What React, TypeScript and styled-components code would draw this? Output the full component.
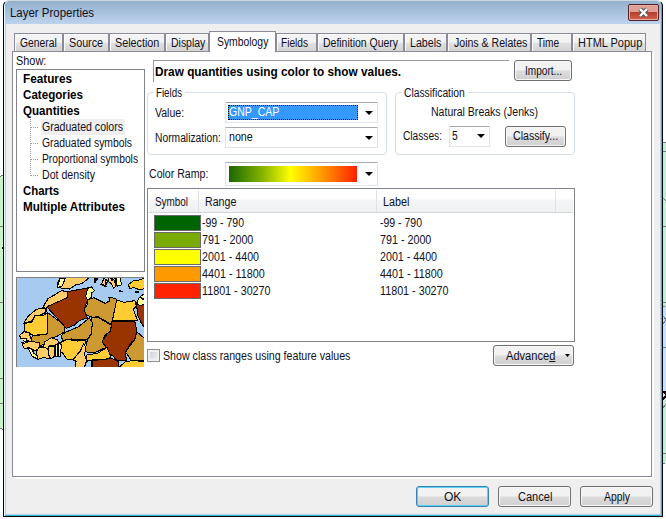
import React, { useLayoutEffect, useRef } from "react";
import styled, { createGlobalStyle } from "styled-components";

const Global = createGlobalStyle`
  * { box-sizing: border-box; }
  body { margin: 0; background: #fff; overflow: hidden; }
  body, button { font: 12px/16px "Liberation Sans", Arial, sans-serif; color: #10101c; }
`;

const Desktop = styled.div`
  width: 666px;
  height: 519px;
  display: flex;
  align-items: flex-start;
`;
const MapStrip = styled.svg`
  display: block;
  flex: none;
`;
const Dialog = styled.main`
  width: 660px;
  height: 517px;
  border: 1px solid #000;
  border-top-color: #cdd6df;
  border-radius: 6px 6px 0 0;
  background: #efefef;
  box-shadow: inset 1px 0 #e8f8fb, inset -1px -1px #35b9da, inset 2px 0 #b5cee9, inset -2px -2px #b5cee9;
  flex: none;
`;
const TitleBar = styled.header`
  height: 23px;
  margin: 0 1px;
  padding: 0 2px 0 5px;
  border-radius: 5px 5px 0 0;
  background: linear-gradient(#93b0cd, #bcd3ed);
  display: flex;
  align-items: center;
  justify-content: space-between;
`;
const CloseButton = styled.button`
  width: 31px;
  height: 17px;
  padding: 0;
  border: 1px solid #54202a;
  border-radius: 2px;
  box-shadow: inset 0 0 0 1px #e9aea2;
  background: linear-gradient(#dda093 0 45%, #b83c2b 50%, #d0654c);
  display: flex;
  align-items: center;
  justify-content: center;
`;
const TabBar = styled.nav`
  height: 27px;
  padding-left: 10px;
  display: flex;
  align-items: flex-end;
`;
const Tab = styled.div<{ $w: number; $pad: number; $active?: boolean }>`
  width: ${(p) => p.$w}px;
  height: ${(p) => (p.$active ? 21 : 18)}px;
  padding: ${(p) => (p.$active ? "2px 0 0" : "1px 0 0")} ${(p) => p.$pad}px;
  border: 1px solid #8b8a98;
  border-bottom: 0;
  background: ${(p) => (p.$active ? "#fff" : "linear-gradient(#f3f3f3 0 48%, #e0e0e0 55%, #d4d4d4)")};
  box-shadow: ${(p) => (p.$active ? "none" : "inset 1px 1px #fcfcfc")};
  margin-bottom: ${(p) => (p.$active ? -1 : 0)}px;
  flex: none;
`;
const Pane = styled.section`
  width: 640px;
  height: 426px;
  margin-left: 8px;
  border: 1px solid #8b8a98;
  background: #fff;
  box-shadow: 2px 2px #fcfcfc;
  padding-left: 3px;
  display: flex;
  align-items: flex-start;
`;
const Sidebar = styled.aside`
  width: 131px;
`;
const ShowLabel = styled.div`
  height: 17px;
  padding-top: 1px;
  display: flex;
`;
const Tree = styled.div`
  width: 129px;
  height: 203px;
  border: 1px solid #80828c;
  padding-top: 1px;
  margin-bottom: 5px;
`;
const Heading = styled.div`
  height: 16px;
  padding-left: 6px;
  font-weight: bold;
  color: #000;
`;
const Branches = styled.div`
  height: 64px;
  margin-left: 13px;
  background: repeating-linear-gradient(#9a9a9a 0 1px, transparent 1px 2px) 0 0 / 1px 57px no-repeat;
`;
const Leaf = styled.div`
  height: 16px;
  display: flex;
`;
const LeafText = styled.div<{ $selected?: boolean }>`
  padding: 0 2px 0 1px;
  background: ${(p) => (p.$selected ? "#efefef" : "transparent")};
`;
const Dash = styled.i`
  width: 8px;
  height: 1px;
  margin: 8px 2px 0 1px;
  background: repeating-linear-gradient(90deg, #9a9a9a 0 1px, transparent 1px 2px);
`;
const Content = styled.div`
  width: 428px;
`;
const TopRow = styled.div`
  height: 34px;
  padding: 8px 3px 0 6px;
  display: flex;
  justify-content: space-between;
  align-items: flex-start;
`;
const Banner = styled.h1`
  width: 356px;
  height: 22px;
  margin: 0;
  padding: 3px 0 0 1px;
  border: solid #96969b;
  border-width: 1px 0 0 1px;
  font-size: 12px;
  line-height: 16px;
  color: #000;
`;
const Button = styled.button<{ $w: number; $primary?: boolean }>`
  width: ${(p) => p.$w}px;
  height: 21px;
  padding: 0;
  border: 1px solid ${(p) => (p.$primary ? "#3c7fb1" : "#707070")};
  border-radius: 3px;
  background: linear-gradient(#f2f2f2 0 47%, #dddddd 52%, #cfcfcf);
  box-shadow: inset 0 0 0 1px ${(p) => (p.$primary ? "#5bd2f2" : "#f8f8f8")};
  display: flex;
  justify-content: center;
  align-items: center;
  flex: none;
`;
const Groups = styled.div`
  display: flex;
  justify-content: space-between;
  padding-top: 6px;
  height: 76px;
`;
const Group = styled.div<{ $w: number }>`
  width: ${(p) => p.$w}px;
  height: 63px;
  border: 1px solid #d5dfe5;
  border-radius: 4px;
  padding: 0 8px 0 7px;
`;
const Legend = styled.div`
  width: max-content;
  height: 16px;
  margin: -8px 0 -1px -1px;
  padding: 0 3px 0 2px;
  background: #fff;
`;
const FieldRow = styled.div`
  height: 25px;
  display: flex;
  align-items: center;
  justify-content: space-between;
`;
const Combo = styled.div<{ $w: number; $h?: number }>`
  width: ${(p) => p.$w}px;
  height: ${(p) => p.$h ?? 21}px;
  padding: 2px 4px 2px 2px;
  border: 1px solid #dfe3ec;
  border-top-color: #a9abb4;
  border-radius: 1px;
  background: #fff;
  display: flex;
  align-items: center;
  justify-content: space-between;
`;
const ComboValue = styled.div<{ $selected?: boolean }>`
  width: 130px;
  height: 15px;
  line-height: 15px;
  padding-left: 1px;
  background: ${(p) => (p.$selected ? "#3399ff" : "transparent")};
  color: ${(p) => (p.$selected ? "#fff" : "inherit")};
  outline: ${(p) => (p.$selected ? "1px dotted #201000" : "0")};
  outline-offset: -1px;
`;
const ClassesValue = styled.div`
  width: 12px;
`;
const Method = styled.div`
  height: 20px;
  margin-top: 4px;
  padding-left: 28px;
`;
const ClassesRow = styled.div`
  height: 24px;
  display: flex;
  align-items: center;
`;
const ClassesCombo = styled.div`
  margin: 0 15px 0 7px;
`;
const RampRow = styled.div`
  height: 24px;
  margin: 0 197px 2px 2px;
  display: flex;
  align-items: center;
  justify-content: space-between;
`;
const Ramp = styled.div`
  width: 128px;
  height: 16px;
  margin-left: 1px;
  background: linear-gradient(90deg, #1b6600, #80b000 25%, #ffff00 48%, #ffa500 70%, #ff2000);
`;
const Table = styled.div`
  height: 154px;
  border: 1px solid #80828c;
  padding: 1px;
`;
const HeadRow = styled.div`
  height: 23px;
  display: grid;
  grid-template-columns: 50px 178px 179px 1fr;
  border-bottom: 1px solid #d5d5d5;
  background: linear-gradient(#fff 40%, #f4f5f6 45%, #f0f1f2);
`;
const HeadCell = styled.div`
  border-right: 1px solid #dfe1e4;
  padding: 4px 0 0 6px;
  &:last-child { border: 0; }
`;
const Rows = styled.div`
  padding: 2px 0 0 5px;
`;
const Row = styled.div`
  height: 17px;
  display: grid;
  grid-template-columns: 48px 178px 1fr;
`;
const Swatch = styled.div<{ $c: string }>`
  width: 47px;
  height: 16px;
  border: 1px solid #6a6a6a;
  background: ${(p) => p.$c};
`;
const BottomRow = styled.div`
  padding: 3px 1px 0 0;
  display: flex;
  align-items: center;
  justify-content: space-between;
`;
const CheckLabel = styled.div`
  display: flex;
  align-items: center;
  gap: 3px;
`;
const Checkbox = styled.div`
  width: 13px;
  height: 13px;
  border: 1px solid #8e8f8f;
  background: linear-gradient(135deg, #c9ced4, #f4f4f4);
  box-shadow: inset 0 0 0 2px #f0f0f0;
`;
const ButtonArrow = styled.div`
  display: flex;
  align-items: center;
  margin: 0 -8px 0 10px;
`;
const Footer = styled.footer`
  display: flex;
  gap: 9px;
  justify-content: flex-end;
  padding: 9px 9px 0 0;
`;
const Fitted = styled.span<{ $w: number }>`
  display: block;
  width: ${(p) => p.$w}px;
  white-space: nowrap;
  flex: none;
`;
const Glyphs = styled.span`
  display: inline-block;
  transform-origin: 0 50%;
`;

/* Condenses or widens a label so that it occupies exactly w pixels. */
function Text({ w, children }: { w: number; children: React.ReactNode }) {
  const ref = useRef<HTMLSpanElement>(null);
  useLayoutEffect(() => {
    const el = ref.current;
    if (el) el.style.transform = `scaleX(${w / el.offsetWidth})`;
  }, [w, children]);
  return (
    <Fitted $w={w}>
      <Glyphs ref={ref}>{children}</Glyphs>
    </Fitted>
  );
}

const Arrow = ({ small }: { small?: boolean }) => (
  <svg width={small ? 5 : 8} height={small ? 3 : 4} viewBox="0 0 8 4" preserveAspectRatio="none">
    <path d="M0 0H8L4 4Z" fill="#000" />
  </svg>
);

const tabs: [string, number, number, number, boolean?][] = [
  ["General", 49, 5, 37],
  ["Source", 46, 5, 34],
  ["Selection", 56, 5, 44],
  ["Display", 44, 5, 34],
  ["Symbology", 67, 7, 51, true],
  ["Fields", 41, 4, 27],
  ["Definition Query", 87, 5, 75],
  ["Labels", 43, 5, 31],
  ["Joins & Relates", 84, 6, 73],
  ["Time", 41, 5, 22],
  ["HTML Popup", 74, 5, 64],
];
const leaves: [string, number][] = [
  ["Graduated colors", 81],
  ["Graduated symbols", 90],
  ["Proportional symbols", 96],
  ["Dot density", 53],
];
const classes: [string, string, number][] = [
  ["-99 - 790", "#006400", 42],
  ["791 - 2000", "#7aab00", 51],
  ["2001 - 4400", "#ffff00", 57],
  ["4401 - 11800", "#ff9900", 63],
  ["11801 - 30270", "#ff2200", 69],
];

function AfricaMap() {
  return (
    <svg width="128" height="90" viewBox="48 51 384 270" shapeRendering="crispEdges" display="block">
      <rect x="48" y="51" width="384" height="270" fill="#a6caf0" />
      <g stroke="#000" strokeWidth="3.2" strokeLinejoin="round">
        <path fill="#fc6" d="M180 54l-9 21 12 9 26 3 18-12 18-4 18-14 8-8z" />
        <path fill="#ff9" d="M180 55h16l-10 24-14 3z" />
        <path fill="#fc3" d="M384 75l15-12 18-3 18-6v32l-18 3-15-6-12 2z" />
        <path fill="#fc6" d="M311 54l12 9-8 17-12-7 5-8zM327 52l15 8 6 17-7 9-7-15-8-6z" />
        <path fill="#ff9" d="M350 52l10 0 5 22-13 5-4-12zM291 51l-5 15 8-9z" />
        <path fill="#fc6" d="M140 145l-12-2 16-27 21-12 19-12 18 3v22l-36 12-23 10z" />
        <path fill="#fc6" d="M128 144l-19 4-26 22-12 20 22-6 8-10 27-12 10-5v-10z" />
        <path fill="#fc3" d="M75 190l22-4 7-18 27-2 11-8 1 65-44 3-25-13z" />
        <path fill="#c93" d="M143 158l49 36 3 20-22 14-20 8-12 14-24 8-26-19 8-12 42-4z" />
        <path fill="#930" d="M141 141l29-14 32-14v-18l61-11 2 38-9 14-2 15 8 23-23 7-17 15-23 9z" />
        <path fill="#ff9" d="M263 85l12-4 8 11-8 7 1 10-12 13-7-12z" />
        <path fill="#c93" d="M263 120l18-7 35 17 12-7-1-12 20 5 6 6-5 39-1 31-12 2-41-24-17 2-20-8-4-16 9-14z" />
        <path fill="#fc3" d="M350 120l22 7 33-5 4 17-9 9 13 34h-76z" />
        <path fill="#930" d="M336 183h68l7 30-4 25-12 8-19 30 3 25-28 1-11-13-18-12-17-33 14-17 10-20z" />
        <path fill="#c93" d="M274 173l20-1 40 24-3 18-15 10-10 22 13 16-37 17-28-4 8-35 10-16z" />
        <path fill="#c93" d="M194 218l42-18 32-26 9 14-3 34-15 18-45-3-24 9-7-18z" />
        <path fill="#fc3" d="M183 247l17-9 33 5 23-3 3 17-13 16-16 15-14 12-16-3-12-18-8-3z" />
        <path fill="#fc6" d="M251 250l7 15-5 18 7 19-7 20h-28l3-18-9-5 22-26z" />
        <path fill="#fc3" d="M260 285l33-5 28-18 12 29-20 10-27-3-28 6z" />
        <path fill="#930" d="M276 302l34-4 26-3 20 11v18h-80z" />
        <path fill="#c93" d="M410 215l24 21v65l-38 3-19-27 9-15 18-22z" />
        <path fill="#fc3" d="M375 306l25-5 35 5v17h-79z" />
        <path fill="#930" d="M410 133l26-4v78l-13-20-10-22z" />
        <path fill="#ff9" d="M410 130l8-18 18-13v32l-16 6z" />
        <path fill="#fc6" d="M72 215l15 3 9 27-28-5-10-13z" />
        <path fill="#ff9" d="M61 236l17-1 4 9-18 4 9 4 12-4" />
        <path fill="#fc6" d="M66 252l24-8 29 4-1 17-12 7-18-6-14 1z" />
        <path fill="#ff9" d="M83 263l11 2 8 15 10 7 0 10-15-8z" />
        <path fill="#fc6" d="M118 261h25l5 34-20-2-14 5-5-22z" />
        <path fill="#fc6" d="M134 246l20-13 17 6 8 12-16 6-15 1-6 8-12-5z" />
        <path fill="#fc6" d="M146 258h18l3 29-14 9-6-8z" />
        <path fill="#ff9" d="M167 254l11-4 8 5-4 17-2 18-12 0z" />
        <path d="M165 255v34M174 253v36" />
      </g>
      <path stroke="#000" strokeWidth="5" d="M344 51l5 13M316 59l3 16M285 51v18M307 73l12 8M357 93l13 2M416 97l-10-1M333 49l4 13M420 111l12 8" />
      <path stroke="#808080" strokeWidth="5" fill="none" d="M48 321V52H432" />
    </svg>
  );
}

export default function App() {
  return (
    <Desktop>
      <Global />
      <MapStrip width="3" height="519" shapeRendering="crispEdges">
        <rect y="176" width="3" height="253" fill="#c8f4c8" />
        <path d="M1 175.5h2M0 176.5h1M0 226.5h3M0 302.5h3M0 378.5h3M0 403.5h3M0 428.5h2M2 429.5h1" stroke="#777" />
        <rect x="2" y="247" width="1" height="2" />
      </MapStrip>
      <Dialog>
        <TitleBar>
          <Text w={84}>Layer Properties</Text>
          <CloseButton aria-label="Close">
            <svg width="13" height="11" viewBox="0 0 13 11">
              <path d="M3 2l7 7M10 2l-7 7" stroke="#54565c" strokeWidth="4.4" />
              <path d="M3 2l7 7M10 2l-7 7" stroke="#fff" strokeWidth="2.4" />
            </svg>
          </CloseButton>
        </TitleBar>
        <TabBar>
          {tabs.map(([name, w, pad, textW, active]) => (
            <Tab key={name} $w={w} $pad={pad} $active={active}>
              <Text w={textW}>{name}</Text>
            </Tab>
          ))}
        </TabBar>
        <Pane>
          <Sidebar>
            <ShowLabel>
              <Text w={30}>Show:</Text>
            </ShowLabel>
            <Tree>
              <Heading><Text w={49}>Features</Text></Heading>
              <Heading><Text w={60}>Categories</Text></Heading>
              <Heading><Text w={57}>Quantities</Text></Heading>
              <Branches>
                {leaves.map(([name, w], i) => (
                  <Leaf key={name}>
                    <Dash />
                    <LeafText $selected={i === 0}><Text w={w}>{name}</Text></LeafText>
                  </Leaf>
                ))}
              </Branches>
              <Heading><Text w={36}>Charts</Text></Heading>
              <Heading><Text w={102}>Multiple Attributes</Text></Heading>
            </Tree>
            <AfricaMap />
          </Sidebar>
          <Content>
            <TopRow>
              <Banner><Text w={246}>Draw quantities using color to show values.</Text></Banner>
              <Button $w={58}><Text w={37}>Import...</Text></Button>
            </TopRow>
            <Groups>
              <Group $w={240}>
                <Legend><Text w={26}>Fields</Text></Legend>
                <FieldRow>
                  <Text w={29}>Value:</Text>
                  <Combo $w={153}>
                    <ComboValue $selected><Text w={50}>GNP_CAP</Text></ComboValue>
                    <Arrow />
                  </Combo>
                </FieldRow>
                <FieldRow>
                  <Text w={66}>Normalization:</Text>
                  <Combo $w={153}>
                    <ComboValue><Text w={24}>none</Text></ComboValue>
                    <Arrow />
                  </Combo>
                </FieldRow>
              </Group>
              <Group $w={180}>
                <Legend><Text w={61}>Classification</Text></Legend>
                <Method><Text w={107}>Natural Breaks (Jenks)</Text></Method>
                <ClassesRow>
                  <Text w={39}>Classes:</Text>
                  <ClassesCombo>
                    <Combo $w={41}>
                      <ClassesValue><Text w={6}>5</Text></ClassesValue>
                      <Arrow />
                    </Combo>
                  </ClassesCombo>
                  <Button $w={61}><Text w={45}>Classify...</Text></Button>
                </ClassesRow>
              </Group>
            </Groups>
            <RampRow>
              <Text w={59}>Color Ramp:</Text>
              <Combo $w={153} $h={24}>
                <Ramp />
                <Arrow />
              </Combo>
            </RampRow>
            <Table>
              <HeadRow>
                <HeadCell><Text w={33}>Symbol</Text></HeadCell>
                <HeadCell><Text w={31}>Range</Text></HeadCell>
                <HeadCell><Text w={26}>Label</Text></HeadCell>
                <HeadCell />
              </HeadRow>
              <Rows>
                {classes.map(([range, color, w]) => (
                  <Row key={range}>
                    <Swatch $c={color} />
                    <Text w={w}>{range}</Text>
                    <Text w={w}>{range}</Text>
                  </Row>
                ))}
              </Rows>
            </Table>
            <BottomRow>
              <CheckLabel>
                <Checkbox />
                <Text w={187}>Show class ranges using feature values</Text>
              </CheckLabel>
              <Button $w={81}>
                <Text w={49}>Advance<u>d</u></Text>
                <ButtonArrow><Arrow small /></ButtonArrow>
              </Button>
            </BottomRow>
          </Content>
        </Pane>
        <Footer>
          <Button $w={73} $primary><Text w={17}>OK</Text></Button>
          <Button $w={73}><Text w={34}>Cancel</Text></Button>
          <Button $w={73}><Text w={26}>Apply</Text></Button>
        </Footer>
      </Dialog>
      <MapStrip width="3" height="519" shapeRendering="crispEdges">
        <rect y="143" width="3" height="320" fill="#c5efcd" />
        <rect y="306" width="3" height="41" fill="#c5e2fa" />
        <rect y="348" width="3" height="43" fill="#c5e2fa" />
        <path d="M0 142.5h3M0 151.5h3M0 226.5h3M0 302.5h3M0 306.5h2M0 347.5h3M0 453.5h3M0 463.5h2M0 198l3 3M0 316l3 4-3 4M0 408l3-4" stroke="#777" fill="none" />
        <path d="M0 391.5h2l1 4-3 4" stroke="#200" strokeWidth="2" fill="none" />
      </MapStrip>
    </Desktop>
  );
}
